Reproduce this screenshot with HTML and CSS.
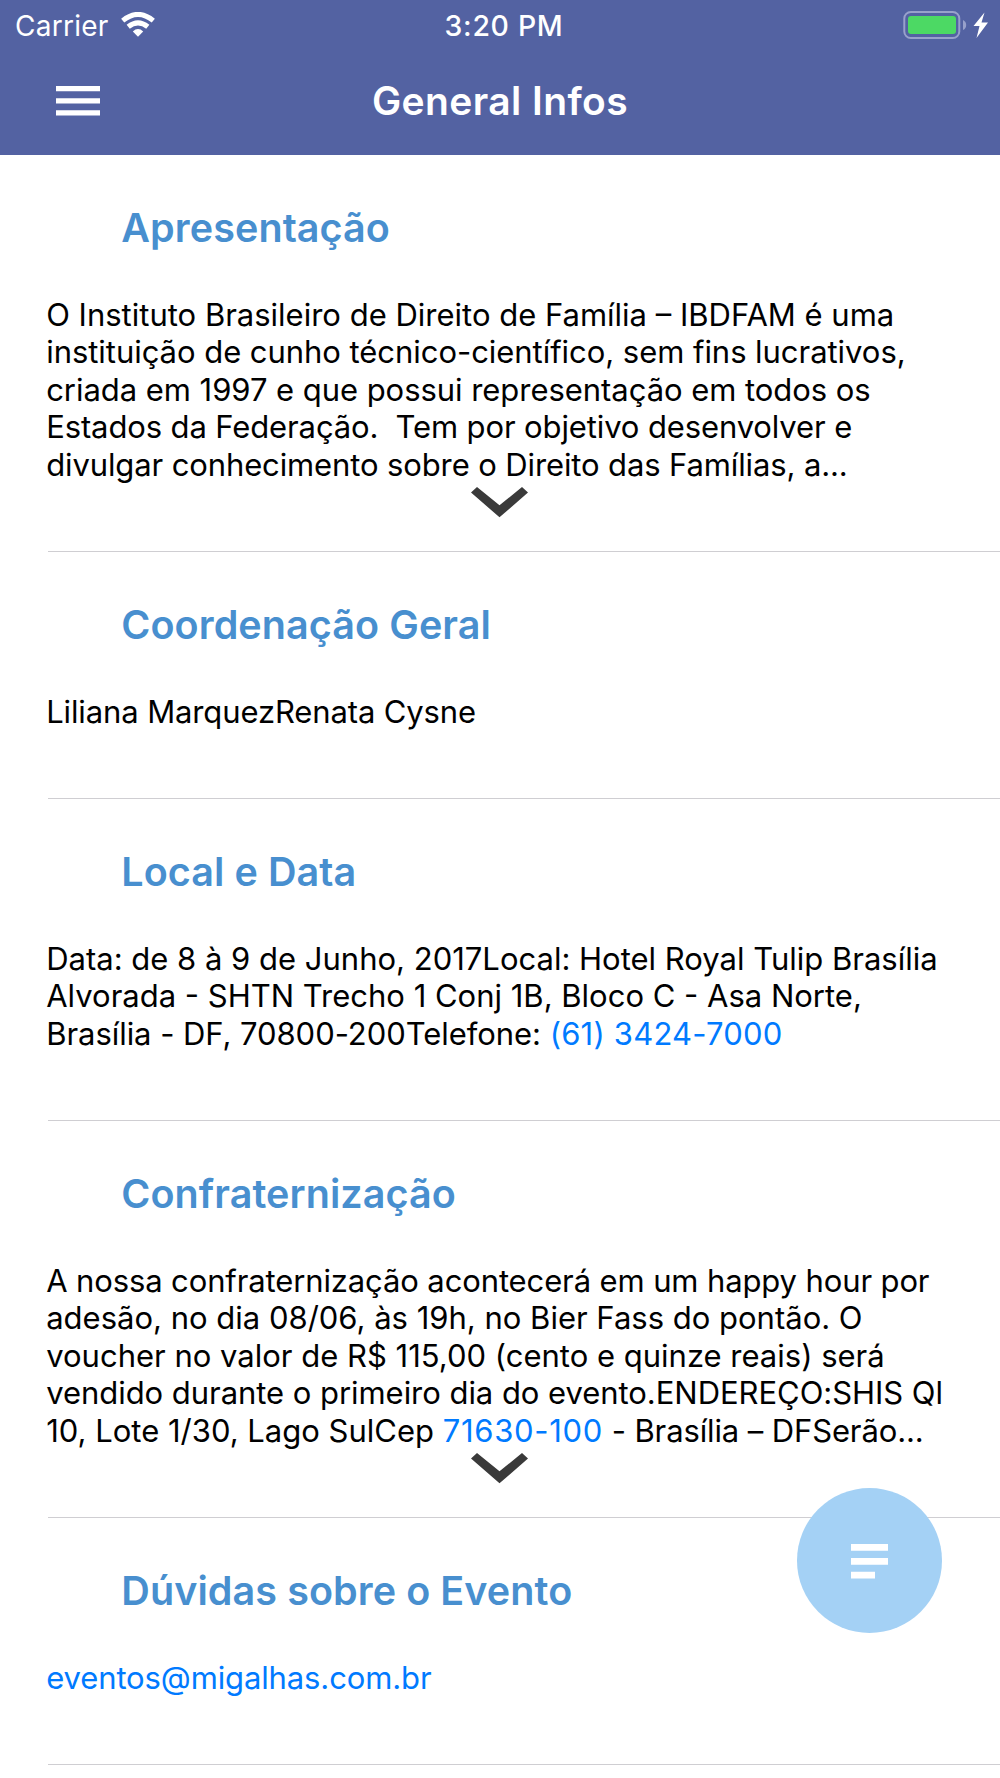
FILE: index.html
```html
<!DOCTYPE html>
<html lang="pt-BR">
<head>
<meta charset="utf-8">
<title>General Infos</title>
<link rel="stylesheet" href="styles.css">
</head>
<body>
<header class="header">
  <div class="status">
    <div class="carrier"><span>Carrier</span>
      <svg viewBox="0 0 34 25" width="34" height="25"><g fill="none" stroke="#fff" stroke-width="5"><path d="M1.7 8.600Q17-3.800 32.300 8.600"/><path d="M7.200 14.800Q17 6.800 26.800 14.800"/></g><path fill="#fff" d="M11.800 19.400Q17 14.800 22.200 19.400L17 24.700z"/></svg>
    </div>
    <div class="time">3:20 PM</div>
    <div class="power">
      <svg viewBox="0 0 86 28" width="86" height="28"><rect x="1.300" y="1" width="55" height="26" rx="6.500" fill="none" stroke="#98a1cb" stroke-width="2"/><rect x="5" y="5" width="48" height="18" rx="3" fill="#4cd964"/><path d="M60 9q3.200 1.500 3.200 5T60 19z" fill="#98a1cb"/><path d="M81.500 1.500L70.500 15h6L73.500 27 85 11.500h-6.500z" fill="#fff"/></svg>
    </div>
  </div>
  <div class="navbar">
    <svg viewBox="0 0 44 30" width="44" height="30"><path fill="#fff" d="M0 0h44v5.300H0zM0 12.200h44v5.300H0zM0 24.300h44v5.300H0z"/></svg>
    <h1 class="title">General Infos</h1>
  </div>
</header>
<main>
  <section class="info">
    <h2>Apresentação</h2>
    <p>O Instituto Brasileiro de Direito de Família – IBDFAM é uma<br><span class="snug">instituição de cunho técnico-científico, sem fins lucrativos,</span><br><span class="snug">criada em 1997 e que possui representação em todos os</span><br><span class="tight">Estados da Federação.&nbsp; Tem por objetivo desenvolver e</span><br><span class="tight">divulgar conhecimento sobre o Direito das Famílias, a...</span></p>
    <div class="more"><svg viewBox="0 0 57 31" width="57" height="31"><path fill="#3a3a3a" d="M0 5.500L6 0 28.500 18.300 51 0 57 5.500 28.500 30.300z"/></svg></div>
  </section>
  <section class="info">
    <h2>Coordenação Geral</h2>
    <p class="tight">Liliana MarquezRenata Cysne</p>
    <div class="more"></div>
  </section>
  <section class="info">
    <h2>Local e Data</h2>
    <p>Data: de 8 à 9 de Junho, 2017Local: Hotel Royal Tulip Brasília<br>Alvorada - SHTN Trecho 1 Conj 1B, Bloco C - Asa Norte,<br><span class="snug">Brasília - DF, 70800-200Telefone: </span><a class="phone">(61) 3424-7000</a></p>
    <div class="more"></div>
  </section>
  <section class="info">
    <h2>Confraternização</h2>
    <p><span class="tight">A nossa confraternização acontecerá em um happy hour por</span><br>adesão, no dia 08/06, às 19h, no Bier Fass do pontão. O<br>voucher no valor de R$ 115,00 (cento e quinze reais) será<br><span class="snug">vendido durante o primeiro dia do evento.ENDEREÇO:SHIS Ql</span><br>10, Lote 1/30, Lago SulCep <a class="zip">71630-100</a><span class="tight"> - Brasília – DFSerão...</span></p>
    <div class="more"><svg viewBox="0 0 57 31" width="57" height="31"><path fill="#3a3a3a" d="M0 5.500L6 0 28.500 18.300 51 0 57 5.500 28.500 30.300z"/></svg></div>
  </section>
  <section class="info">
    <h2>Dúvidas sobre o Evento</h2>
    <p><a class="tight">eventos@migalhas.com.br</a></p>
    <div class="more"></div>
  </section>
</main>
<div class="fab"><svg viewBox="0 0 37 35" width="37" height="35"><path fill="#fff" d="M0 0h37v6.700H0zM0 14h37v6.700H0zM0 27.700h24v6.700H0z"/></svg></div>
</body>
</html>
```
FILE: styles.css
```css
* { box-sizing: border-box; }
body { margin: 0; height: 1778px; overflow: hidden; font-family: Inter, sans-serif; color: #000; background: #fff; }
svg { display: block; }
.header { height: 155px; background: #5362a2; color: #fff; }
.status { display: grid; grid-template-columns: 1fr auto 1fr; height: 51px; align-items: center; padding: 0 11px 0 15px; font-size: 28px; line-height: 34px; }
.carrier { display: flex; gap: 12px; align-items: center; letter-spacing: .25px; }
.carrier svg { margin-bottom: 2px; }
.time { padding-left: 4px; font-weight: 500; font-size: 28.4px; letter-spacing: .7px; }
.power { display: flex; justify-content: flex-end; margin-bottom: 2px; }
.navbar { display: grid; grid-template-columns: 44px 1fr 44px; align-items: center; padding: 0 55.5px; height: 100px; }
.title { margin: 0; font-size: 39px; line-height: 48px; letter-spacing: .4px; font-weight: 600; text-align: center; }
.info { display: flex; flex-direction: column; }
.info::after { content: ""; height: 1px; margin-left: 48px; background: #cfced2; }
h2 { margin: 49px 0 44px 121.3px; font-size: 39.5px; line-height: 48px; letter-spacing: .08px; font-weight: 600; color: #488fcf; }
p { margin: 0 0 0 46.2px; font-size: 31px; line-height: 37.42px; white-space: nowrap; }
a { color: #007aff; }
.snug { letter-spacing: -.045px; }
.tight { letter-spacing: -.12px; }
.phone { letter-spacing: .2px; }
.zip { letter-spacing: .7px; }
.more { display: flex; justify-content: center; height: 67.7px; padding: 4px 1px 0 0; }
.fab { position: absolute; left: 797px; top: 1488px; display: grid; place-items: center; width: 145px; height: 145px; padding: 1px 1px 0 0; border-radius: 50%; background: #a4d1f5; }
```
